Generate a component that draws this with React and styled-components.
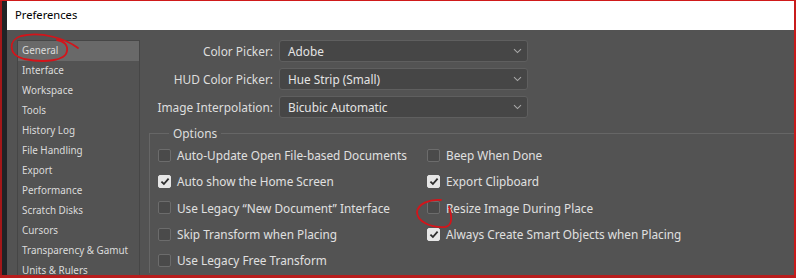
import React from 'react';
import styled, { createGlobalStyle } from 'styled-components';

const GlobalStyle = createGlobalStyle`
  html, body {
    margin: 0;
    padding: 0;
    background: #1c1c1c;
  }
  body {
    font-family: 'Noto Sans', 'Open Sans', sans-serif;
  }
`;

const Frame = styled.div`
  position: relative;
  width: 796px;
  height: 278px;
  box-sizing: border-box;
  display: flex;
  overflow: hidden;
  border-top: 1px solid #d01a1a;
  border-right: 2px solid #c81c1c;
  border-bottom: 3px solid #b81d1d;
`;

const DesktopStrip = styled.div`
  width: 7px;
  flex: none;
  background: #202326;
  border-left: 2px solid #a3181a;
  box-sizing: border-box;
`;

const Window = styled.div`
  flex: 1;
  display: flex;
  flex-direction: column;
  min-width: 0;
`;

const TitleBar = styled.div`
  height: 29px;
  flex: none;
  background: #ffffff;
  display: flex;
  align-items: center;
  padding: 0 0 2px 8px;
  box-sizing: border-box;
  font-size: 11.2px;
  color: #000;
`;

const Body = styled.div`
  flex: 1;
  display: flex;
  background: #535353;
  padding-top: 10px;
  min-height: 0;
`;

const Sidebar = styled.ul`
  list-style: none;
  margin: 0 0 0 10px;
  padding: 0;
  width: 123px;
  flex: none;
  box-sizing: border-box;
  border: 1px solid #464646;
  border-bottom: none;
`;

const NavItem = styled.li`
  height: 20px;
  line-height: 19px;
  padding-left: 4px;
  font-size: 9.9px;
  color: #dcdcdc;
  white-space: nowrap;
  background: ${(p) => (p.$active ? '#696969' : 'transparent')};
`;

const Main = styled.div`
  flex: 1;
  min-width: 0;
  display: flex;
  flex-direction: column;
`;

const Form = styled.div`
  display: grid;
  grid-template-columns: 133px 249px;
  column-gap: 6px;
  row-gap: 6px;
  align-items: center;
`;

const Label = styled.label`
  text-align: right;
  font-size: 11.9px;
  color: #dedede;
  white-space: nowrap;
`;

const Select = styled.div`
  height: 22px;
  box-sizing: border-box;
  border: 1px solid #5f5f5f;
  border-radius: 3px;
  background: #464646;
  display: flex;
  align-items: center;
  justify-content: space-between;
  padding: 0 5px 0 8px;
  font-size: 11.8px;
  color: #e4e4e4;
`;

const Options = styled.fieldset`
  margin: 7px 0 0 9px;
  padding: 0 0 0 8px;
  border: 1px solid #666666;
  border-right: none;
  border-bottom: none;
  min-width: 0;
`;

const Legend = styled.legend`
  margin-left: 11px;
  padding: 0 4px;
  font-size: 11.9px;
  line-height: 16px;
  color: #dedede;
`;

const CheckGrid = styled.div`
  display: grid;
  grid-template-columns: 269px auto;
  grid-auto-rows: 26.3px;
  align-items: center;
  margin-top: 1px;
`;

const CheckRow = styled.div`
  display: flex;
  align-items: center;
  gap: 6px;
  font-size: 11.8px;
  color: #e0e0e0;
  white-space: nowrap;
`;

const Box = styled.span`
  width: 13px;
  height: 13px;
  box-sizing: border-box;
  border-radius: 2px;
  flex: none;
  display: flex;
  align-items: center;
  justify-content: center;
  background: ${(p) => (p.$checked ? '#e6e6e6' : '#4a4a4a')};
  border: 1px solid ${(p) => (p.$checked ? '#e6e6e6' : '#6c6c6c')};
`;

const Annotation = styled.svg`
  position: absolute;
  left: 0;
  top: 0;
  pointer-events: none;
`;

const Chevron = () => (
  <svg width="9" height="6" viewBox="0 0 9 6">
    <path d="M1 1.2 L4.5 4.6 L8 1.2" fill="none" stroke="#a8a8a8" strokeWidth="1.1" />
  </svg>
);

const Check = () => (
  <svg width="10" height="9" viewBox="0 0 10 9">
    <path d="M1.4 4.6 L3.9 7 L8.6 1.6" fill="none" stroke="#2e2e2e" strokeWidth="1.8" />
  </svg>
);

const Checkbox = ({ checked, children }) => (
  <CheckRow>
    <Box $checked={checked}>{checked && <Check />}</Box>
    {children}
  </CheckRow>
);

const navItems = [
  'General',
  'Interface',
  'Workspace',
  'Tools',
  'History Log',
  'File Handling',
  'Export',
  'Performance',
  'Scratch Disks',
  'Cursors',
  'Transparency & Gamut',
  'Units & Rulers',
];

const fields = [
  ['Color Picker:', 'Adobe'],
  ['HUD Color Picker:', 'Hue Strip (Small)'],
  ['Image Interpolation:', 'Bicubic Automatic'],
];

const options = [
  ['Auto-Update Open File-based Documents', false],
  ['Beep When Done', false],
  ['Auto show the Home Screen', true],
  ['Export Clipboard', true],
  ['Use Legacy \u201CNew Document\u201D Interface', false],
  ['Resize Image During Place', false],
  ['Skip Transform when Placing', false],
  ['Always Create Smart Objects when Placing', true],
  ['Use Legacy Free Transform', false],
];

export default function App() {
  return (
    <>
      <GlobalStyle />
      <Frame>
        <DesktopStrip />
        <Window>
          <TitleBar>Preferences</TitleBar>
          <Body>
            <Sidebar>
              {navItems.map((item, i) => (
                <NavItem key={item} $active={i === 0}>
                  {item}
                </NavItem>
              ))}
            </Sidebar>
            <Main>
              <Form>
                {fields.map(([label, value]) => (
                  <React.Fragment key={label}>
                    <Label>{label}</Label>
                    <Select>
                      {value}
                      <Chevron />
                    </Select>
                  </React.Fragment>
                ))}
              </Form>
              <Options>
                <Legend>Options</Legend>
                <CheckGrid>
                  {options.map(([text, checked]) => (
                    <Checkbox key={text} checked={checked}>
                      {text}
                    </Checkbox>
                  ))}
                </CheckGrid>
              </Options>
            </Main>
          </Body>
        </Window>
        <Annotation width="796" height="278" viewBox="0 0 796 278">
          <path
            d="M78 47 C66 38 42 30 21 35 C8 39 8 54 24 58 C44 62 66 60 67 50 C68 44 64 40 57 39"
            fill="none"
            stroke="#d4141a"
            strokeWidth="1.8"
            strokeLinecap="round"
          />
          <path
            d="M441 199 C429 198 418 203 417 211 C417 220 430 227 445 226 C453 225 452 215 449 206"
            fill="none"
            stroke="#d4141a"
            strokeWidth="1.8"
            strokeLinecap="round"
          />
        </Annotation>
      </Frame>
    </>
  );
}
